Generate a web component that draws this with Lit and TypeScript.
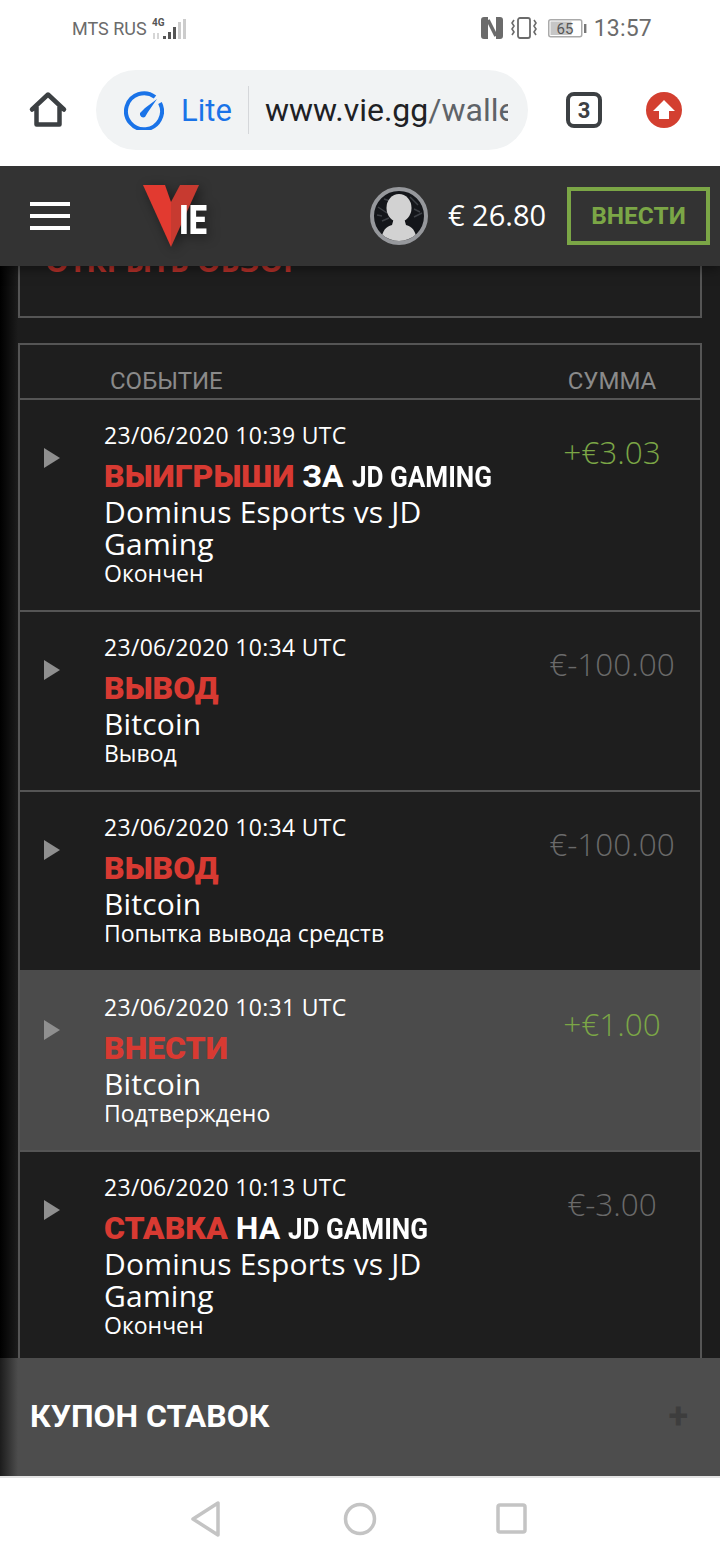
import { LitElement, html, css, svg } from 'lit';
import { customElement } from 'lit/decorators.js';

interface Tx {
    time: string;
    kind: string;
    team?: string;
    joiner?: string;
    game: string;
    status: string;
    amount: string;
    win: boolean;
    active?: boolean;
}

const ROWS: Tx[] = [
    { time: '23/06/2020 10:39 UTC', kind: 'ВЫИГРЫШИ', joiner: 'ЗА', team: 'JD GAMING', game: 'Dominus Esports vs JD Gaming', status: 'Окончен', amount: '+€3.03', win: true },
    { time: '23/06/2020 10:34 UTC', kind: 'ВЫВОД', game: 'Bitcoin', status: 'Вывод', amount: '€-100.00', win: false },
    { time: '23/06/2020 10:34 UTC', kind: 'ВЫВОД', game: 'Bitcoin', status: 'Попытка вывода средств', amount: '€-100.00', win: false },
    { time: '23/06/2020 10:31 UTC', kind: 'ВНЕСТИ', game: 'Bitcoin', status: 'Подтверждено', amount: '+€1.00', win: true, active: true },
    { time: '23/06/2020 10:13 UTC', kind: 'СТАВКА', joiner: 'НА', team: 'JD GAMING', game: 'Dominus Esports vs JD Gaming', status: 'Окончен', amount: '€-3.00', win: false },
];

@customElement('app-root')
export class AppRoot extends LitElement {
    static styles = css`
        :host {
            display: flex;
            flex-direction: column;
            width: 720px;
            height: 1560px;
            overflow: hidden;
            background: #fff;
            font-family: 'Open Sans', 'Noto Sans', sans-serif;
        }

        /* android status bar */
        .status {
            height: 56px;
            flex: none;
            display: flex;
            align-items: center;
            justify-content: space-between;
            padding: 0 68px 0 72px;
            font-family: Roboto, sans-serif;
            color: #6b6b6b;
        }
        .status-group {
            display: flex;
            align-items: center;
        }
        .carrier {
            font-size: 18px;
        }
        .clock {
            font-size: 23px;
            margin-left: 6px;
            letter-spacing: 0.2px;
        }

        /* chrome toolbar */
        .toolbar {
            height: 110px;
            flex: none;
            display: flex;
            align-items: flex-start;
            padding: 14px 38px 0 28px;
            box-sizing: border-box;
        }
        .home {
            margin-top: 20px;
            flex: none;
        }
        .pill {
            width: 432px;
            height: 80px;
            margin-left: 28px;
            border-radius: 40px;
            background: #f1f3f4;
            display: flex;
            align-items: center;
            flex: none;
            padding-left: 28px;
            box-sizing: border-box;
        }
        .lite {
            font-family: Roboto, sans-serif;
            font-size: 31px;
            color: #1a73e8;
            margin-left: 17px;
            width: 51px;
        }
        .sep {
            width: 1px;
            height: 48px;
            background: #d5d7da;
            margin: 0 16px;
        }
        .url {
            font-family: Roboto, sans-serif;
            font-size: 32px;
            color: #202124;
            width: 243px;
            overflow: hidden;
            white-space: nowrap;
        }
        .url span {
            color: #5f6368;
        }
        .tabs {
            width: 36px;
            height: 36px;
            box-sizing: border-box;
            border: 4px solid #3c4043;
            border-radius: 8px;
            margin: 22px 0 0 38px;
            display: flex;
            align-items: center;
            justify-content: center;
            font-family: Roboto, sans-serif;
            font-weight: 700;
            font-size: 22px;
            color: #3c4043;
            flex: none;
        }
        .update {
            margin: 22px 0 0 44px;
            flex: none;
        }

        /* site header */
        .header {
            height: 100px;
            flex: none;
            background: #333;
            display: flex;
            align-items: center;
            position: relative;
            z-index: 2;
            box-shadow: 0 2px 12px rgba(0, 0, 0, 0.5);
            clip-path: inset(0 0 -20px 0);
        }
        .burger {
            width: 40px;
            margin-left: 30px;
            display: flex;
            flex-direction: column;
            gap: 8px;
            flex: none;
        }
        .burger i {
            height: 4px;
            background: #fff;
            display: block;
        }
        .logo {
            margin-left: 73px;
            flex: none;
            filter: drop-shadow(3px 3px 6px rgba(0, 0, 0, 0.45));
        }
        .avatar {
            margin-left: 157px;
            flex: none;
        }
        .balance {
            font-size: 29px;
            color: #fff;
            margin: 0 0 3px 20px;
            width: 119px;
            white-space: nowrap;
        }
        .deposit {
            width: 143px;
            height: 58px;
            box-sizing: border-box;
            border: 4px solid #7ba646;
            display: flex;
            align-items: center;
            justify-content: center;
            color: #7ba646;
            font-family: Roboto, sans-serif;
            font-weight: 700;
            font-size: 24.5px;
            padding-bottom: 1px;
            flex: none;
        }

        /* scrolled page body */
        .main {
            flex: 1;
            min-height: 0;
            overflow: hidden;
            position: relative;
            background: #1c1c1c;
            padding: 0 18px;
        }
        .main::before {
            content: '';
            position: absolute;
            left: 0;
            top: 0;
            bottom: 0;
            width: 18px;
            background: linear-gradient(to right, #000, #1c1c1c);
        }
        .summary {
            height: 112px;
            margin-top: -60px;
            border: 2px solid #555;
            box-sizing: border-box;
            padding: 32px 25px 0;
            color: #b7312a;
            font-size: 30px;
            font-weight: 700;
            background: #1e1e1e;
        }
        .table {
            margin-top: 25px;
            border: 2px solid #555;
            background: #1e1e1e;
        }
        .thead {
            height: 53px;
            display: flex;
            align-items: flex-end;
            font-family: Roboto, sans-serif;
            font-size: 24px;
            color: #8a8a8a;
            padding-bottom: 3px;
            box-sizing: border-box;
        }
        .thead .event {
            margin-left: 90px;
            flex: 1;
        }
        .thead .sum {
            width: 100px;
            text-align: center;
            margin-right: 38px;
        }
        .row {
            border-top: 2px solid #555;
            display: flex;
            padding: 21px 0 24px;
            color: #fff;
        }
        .row.active {
            background: #4b4b4b;
            border-top-color: #4b4b4b;
        }
        .arrow {
            width: 84px;
            flex: none;
            padding: 27px 0 0 24px;
            box-sizing: border-box;
        }
        .body {
            flex: 1;
            min-width: 0;
        }
        .time {
            font-size: 23px;
            line-height: 28px;
            letter-spacing: 0.3px;
        }
        .title {
            font-family: Roboto, sans-serif;
            font-size: 32px;
            line-height: 36px;
            height: 36px;
            font-weight: 700;
            margin-top: 9px;
            white-space: nowrap;
        }
        .title b {
            color: #d83a32;
        }
        .title .team {
            display: inline-block;
            font-size: 30px;
            transform: scaleX(0.87);
            transform-origin: left center;
        }
        .game {
            font-size: 30px;
            line-height: 32px;
            margin-top: 2px;
            letter-spacing: 0.2px;
        }
        .state {
            font-size: 23px;
            line-height: 26px;
        }
        .amount {
            width: 176px;
            flex: none;
            text-align: center;
            font-size: 31.5px;
            font-weight: 300;
            line-height: 36px;
            padding-top: 13px;
            box-sizing: border-box;
            white-space: nowrap;
            color: #6a6a6a;
        }
        .amount.win {
            color: #7ba646;
        }

        /* bet slip */
        .slip {
            height: 120px;
            flex: none;
            background: #4d4d4d;
            display: flex;
            align-items: center;
            justify-content: space-between;
            padding: 0 32px 2px 30px;
            position: relative;
            z-index: 2;
            border-bottom: 2px solid #e3e3e3;
            box-sizing: border-box;
        }
        .slip::before {
            content: '';
            position: absolute;
            left: 0;
            top: 0;
            bottom: 0;
            width: 18px;
            background: linear-gradient(to right, #1c1c1c, #4d4d4d);
        }
        .slip-title {
            font-family: Roboto, sans-serif;
            font-weight: 700;
            font-size: 32px;
            color: #fff;
            position: relative;
            white-space: nowrap;
        }
        .plus {
            font-family: Roboto, sans-serif;
            font-weight: 700;
            font-size: 36px;
            color: #3d3d3d;
        }

        /* android nav bar */
        .nav {
            height: 82px;
            flex: none;
            display: flex;
            align-items: center;
            justify-content: center;
            background: #fff;
        }
    `;

    private _signal() {
        const bars = [[12, 3, '#555'], [17, 7, '#555'], [22, 12, '#555'], [27, 17, '#ccc'], [32, 20, '#ccc']];
        return html`<svg width="36" height="22" viewBox="0 0 36 22" style="margin-left:4px">
            <text x="1" y="9" font-size="10" font-weight="700" font-family="Roboto" fill="#555">4G</text>
            ${bars.map(([x, h, c]) => svg`<rect x=${x} y=${22 - Number(h)} width="3" height=${h} fill=${c}></rect>`)}
            <path d="M3 16v6M7 16v6" stroke="#ccc" stroke-width="1.6"></path>
        </svg>`;
    }

    private _statusIcons() {
        return html`
            <svg width="22" height="22" viewBox="0 0 22 22">
                <path d="M3 0h4v22H3a3 3 0 0 1-3-3V3a3 3 0 0 1 3-3zM15 0h4a3 3 0 0 1 3 3v16a3 3 0 0 1-3 3h-4z" fill="#6b6b6b"></path>
                <path d="M7 3l8 16" fill="none" stroke="#6b6b6b" stroke-width="3.6"></path>
            </svg>
            <svg width="28" height="22" viewBox="0 0 28 22" style="margin-left:7px">
                <rect x="8" y="1" width="12" height="20" rx="2" fill="none" stroke="#6b6b6b" stroke-width="1.8"></rect>
                <path d="M4 3l-2 3 2 3-2 3 2 3-2 3M24 3l2 3-2 3 2 3-2 3 2 3" fill="none" stroke="#6b6b6b" stroke-width="1.6"></path>
            </svg>
            <svg width="40" height="20" viewBox="0 0 40 20" style="margin-left:10px">
                <rect x="0.75" y="1.75" width="33" height="17" rx="2" fill="#fff" stroke="#aaa" stroke-width="1.5"></rect>
                <rect x="2.5" y="3.5" width="21" height="13.5" fill="#c6c6c6"></rect>
                <rect x="36" y="6" width="2.4" height="9" fill="#777"></rect>
                <text x="17" y="15.5" text-anchor="middle" font-size="15" font-family="Roboto" fill="#555">65</text>
            </svg>`;
    }

    private _logo() {
        return html`<svg class="logo" width="70" height="66" viewBox="0 0 70 66">
            <path d="M0 2h22l6 17v45z" fill="#e23a30"></path>
            <path d="M56 2H37l-9 17v45z" fill="#c73a30"></path>
            <text x="36" y="51" font-family="Roboto" font-weight="900" font-size="40" fill="#fff" textLength="28" lengthAdjust="spacingAndGlyphs">IE</text>
        </svg>`;
    }

    private _avatar() {
        // the speckled dark backdrop of the profile picture
        const specks = ['M8 20l9 6', 'M12 34l7-3', 'M40 10l8 8', 'M44 30l8-4', 'M14 12l6 2', 'M44 22l6 3', 'M7 28l5 1'];
        return html`<svg class="avatar" width="58" height="58" viewBox="0 0 58 58">
            <defs>
                <clipPath id="av"><circle cx="29" cy="29" r="25"></circle></clipPath>
            </defs>
            <circle cx="29" cy="29" r="27" fill="#14161a" stroke="#96989c" stroke-width="4"></circle>
            <g clip-path="url(#av)">
                ${specks.map((d) => svg`<path d=${d} stroke="#3d4045" stroke-width="1.5"></path>`)}
                <g fill="#d2d2d2">
                    <ellipse cx="29" cy="21" rx="12.5" ry="14"></ellipse>
                    <path d="M24 31h10l2 7c7 2 10 6 12 20H10c2-14 5-18 12-20z"></path>
                </g>
            </g>
        </svg>`;
    }

    private _row(r: Tx) {
        return html`<div class="row ${r.active ? 'active' : ''}">
            <div class="arrow">
                <svg width="16" height="20" viewBox="0 0 16 20"><path d="M0 0l16 10L0 20z" fill="#8f8f8f"></path></svg>
            </div>
            <div class="body">
                <div class="time">${r.time}</div>
                <div class="title"><b>${r.kind}</b>${r.joiner ? html` ${r.joiner} <span class="team">${r.team}</span>` : ''}</div>
                <div class="game">${r.game}</div>
                <div class="state">${r.status}</div>
            </div>
            <div class="amount ${r.win ? 'win' : ''}">${r.amount}</div>
        </div>`;
    }

    render() {
        return html`
            <div class="status">
                <div class="status-group">
                    <span class="carrier">MTS RUS</span>
                    ${this._signal()}
                </div>
                <div class="status-group">
                    ${this._statusIcons()}
                    <span class="clock">13:57</span>
                </div>
            </div>

            <div class="toolbar">
                <svg class="home" width="40" height="40" viewBox="0 0 40 40">
                    <path d="M4 19.5L20 4.5l16 15M8.5 17v17.5h23V17" fill="none" stroke="#3c4043" stroke-width="4.5" stroke-linejoin="round" stroke-linecap="round"></path>
                </svg>
                <div class="pill">
                    <svg width="40" height="40" viewBox="0 0 40 40">
                        <path d="M31 7A18 18 0 1 0 36 13" fill="none" stroke="#1a73e8" stroke-width="4"></path>
                        <path d="M33 9L21 18l-5 5a3.5 3.5 0 0 0 5 4l3-5z" fill="#1a73e8"></path>
                    </svg>
                    <span class="lite">Lite</span>
                    <div class="sep"></div>
                    <div class="url">www.vie.gg<span>/wallet</span></div>
                </div>
                <div class="tabs">3</div>
                <svg class="update" width="36" height="36" viewBox="0 0 36 36">
                    <circle cx="18" cy="18" r="18" fill="#d33f30"></circle>
                    <path d="M18 8l11 11h-6v8H13v-8H7z" fill="#fff"></path>
                </svg>
            </div>

            <div class="header">
                <div class="burger"><i></i><i></i><i></i></div>
                ${this._logo()}
                ${this._avatar()}
                <span class="balance">€ 26.80</span>
                <div class="deposit">ВНЕСТИ</div>
            </div>

            <div class="main">
                <div class="summary">ОТКРЫТЬ ОБЗОР</div>
                <div class="table">
                    <div class="thead">
                        <span class="event">СОБЫТИЕ</span>
                        <span class="sum">СУММА</span>
                    </div>
                    ${ROWS.map((r) => this._row(r))}
                </div>
            </div>

            <div class="slip">
                <span class="slip-title">КУПОН СТАВОК</span>
                <span class="plus">+</span>
            </div>

            <div class="nav">
                <svg width="360" height="40" viewBox="0 0 360 40">
                    <path d="M38 4v32L13 20z" fill="none" stroke="#c4c4c4" stroke-width="3.5" stroke-linejoin="round"></path>
                    <circle cx="180" cy="20" r="14.5" fill="none" stroke="#c4c4c4" stroke-width="3.5"></circle>
                    <rect x="318" y="6" width="27" height="27" rx="2" fill="none" stroke="#c4c4c4" stroke-width="3.5"></rect>
                </svg>
            </div>
        `;
    }
}
